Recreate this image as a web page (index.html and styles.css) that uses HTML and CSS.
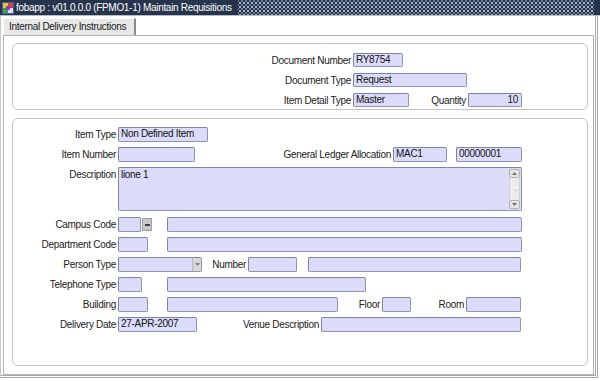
FILE: index.html
```html
<!DOCTYPE html>
<html>
<head>
<meta charset="utf-8">
<link rel="stylesheet" href="styles.css">
</head>
<body>
<div class="app">
  <div class="titlebar">
    <svg class="appicon" width="12" height="12" viewBox="0 0 12 12">
      <rect x="0" y="0" width="12" height="12" fill="#4a5ca8"/>
      <rect x="1" y="1" width="5" height="5" fill="#e8c040"/>
      <rect x="6" y="1" width="5" height="5" fill="#d04040"/>
      <rect x="1" y="6" width="5" height="5" fill="#40a050"/>
      <rect x="6" y="6" width="5" height="5" fill="#e0e0f0"/>
      <circle cx="6" cy="6" r="2.2" fill="#8040b0"/>
    </svg>
    <span class="titletext">fobapp : v01.0.0.0 (FPMO1-1) Maintain Requisitions</span>
    <span class="dots"></span>
  </div>
  <div class="main">
    <div class="tabs">
      <div class="tab">Internal Delivery Instructions</div>
    </div>
    <div class="frame">
      <div class="panel p1">
        <div class="row">
          <span class="lbl l1">Document Number</span>
          <span class="fld w50">RY8754</span>
        </div>
        <div class="row">
          <span class="lbl l1">Document Type</span>
          <span class="fld w114">Request</span>
        </div>
        <div class="row">
          <span class="lbl l1">Item Detail Type</span>
          <span class="fld w56">Master</span>
          <span class="lbl lq">Quantity</span>
          <span class="fld w54 num">10</span>
        </div>
      </div>
      <div class="panel p2">
        <div class="row r2">
          <span class="lbl l2">Item Type</span>
          <span class="fld w90">Non Defined Item</span>
        </div>
        <div class="row r2">
          <span class="lbl l2">Item Number</span>
          <span class="fld w77"></span>
          <span class="lbl lgla">General Ledger Allocation</span>
          <span class="fld w54">MAC1</span>
          <span class="fld w66 ml9">00000001</span>
        </div>
        <div class="row r2 desc">
          <span class="lbl l2">Description</span>
          <div class="fld w404 area">
            <span class="areatext">lione 1</span>
            <div class="vscroll">
              <span class="sbtn">
                <svg width="7" height="5" viewBox="0 0 7 5"><path d="M1 4 L3.5 1 L6 4 Z" fill="#707070"/></svg>
              </span>
              <span class="strack"><span class="sthumb"></span></span>
              <span class="sbtn">
                <svg width="7" height="5" viewBox="0 0 7 5"><path d="M1 1 L3.5 4 L6 1 Z" fill="#707070"/></svg>
              </span>
            </div>
          </div>
        </div>
        <div class="row r2">
          <span class="lbl l2">Campus Code</span>
          <span class="fld w23"></span>
          <span class="lov"><span class="lovdash"></span></span>
          <span class="fld w355 ml15"></span>
        </div>
        <div class="row r2">
          <span class="lbl l2">Department Code</span>
          <span class="fld w30"></span>
          <span class="fld w355 ml19"></span>
        </div>
        <div class="row r2">
          <span class="lbl l2">Person Type</span>
          <span class="fld w84 sel">
            <span class="selbtn">
              <svg width="7" height="5" viewBox="0 0 7 5"><path d="M1 1 L3.5 4 L6 1 Z" fill="#808080"/></svg>
            </span>
          </span>
          <span class="lbl lnum">Number</span>
          <span class="fld w49"></span>
          <span class="fld w213 ml11"></span>
        </div>
        <div class="row r2">
          <span class="lbl l2">Telephone Type</span>
          <span class="fld w24"></span>
          <span class="fld w199 ml25"></span>
        </div>
        <div class="row r2">
          <span class="lbl l2">Building</span>
          <span class="fld w30"></span>
          <span class="fld w171 ml19"></span>
          <span class="lbl lfloor">Floor</span>
          <span class="fld w29"></span>
          <span class="lbl lroom">Room</span>
          <span class="fld w55"></span>
        </div>
        <div class="row r2">
          <span class="lbl l2">Delivery Date</span>
          <span class="fld w79">27-APR-2007</span>
          <span class="lbl lvenue">Venue Description</span>
          <span class="fld w200"></span>
        </div>
      </div>
    </div>
  </div>
</div>
</body>
</html>
```
FILE: styles.css
```css
* { box-sizing: border-box; }
html, body { margin: 0; padding: 0; }
body {
  width: 600px;
  height: 381px;
  overflow: hidden;
  background: #ffffff;
  font-family: "Liberation Sans", Arial, sans-serif;
  font-size: 10px;
  letter-spacing: -0.3px;
  color: #1a1a1a;
}
.app {
  width: 600px;
  height: 381px;
  display: flex;
  flex-direction: column;
}
.titlebar {
  height: 16px;
  flex: none;
  display: flex;
  align-items: center;
  background-color: #26344c;
  border-bottom: 1px solid #b8bcc4;
  color: #ffffff;
}
.appicon { margin: 0 2px 0 2px; flex: none; }
.titletext {
  white-space: nowrap;
  padding-right: 6px;
}
.dots {
  flex: 1;
  height: 100%;
  background-color: #26344c;
  background-image:
    radial-gradient(circle, #a4b0c4 0.8px, transparent 1.1px),
    radial-gradient(circle, #6c7a92 0.8px, transparent 1.1px);
  background-size: 4px 4px, 4px 4px;
  background-position: 0 1px, 2px 3px;
  margin-right: 6px;
}
.main {
  flex: 1;
  display: flex;
  flex-direction: column;
  margin-right: 2px;
  margin-bottom: 3px;
  border-right: 3px double #a8a8a8;
  border-bottom: 3px double #a8a8a8;
  border-left: 1px solid #c8c8c8;
}
.tabs {
  height: 19px;
  flex: none;
  display: flex;
  align-items: flex-end;
  padding-left: 2px;
}
.tab {
  height: 17px;
  width: 133px;
  background: #e8e8e8;
  border-top: 1px solid #ffffff;
  border-left: 1px solid #ffffff;
  border-right: 2px solid #8c8c8c;
  padding: 2px 0 0 5px;
  white-space: nowrap;
  color: #1a1a1a;
}
.frame {
  flex: 1;
  margin-left: 2px;
  margin-right: 1px;
  border: 1px solid #b4b4b4;
  background: #ffffff;
  padding: 7px 4px 0 8px;
  display: flex;
  flex-direction: column;
}
.panel {
  border: 1px solid #c4c4c4;
  border-radius: 6px;
  width: 576px;
}
.p1 {
  height: 67px;
  padding-top: 9px;
  margin-bottom: 8px;
}
.p2 {
  height: 248px;
  padding-top: 8px;
}
.row {
  display: flex;
  align-items: center;
  height: 14px;
  margin-bottom: 6px;
}
.r2 { height: 15px; margin-bottom: 5px; }
.row.desc { height: 44px; margin-bottom: 6px; align-items: flex-start; }
.lbl {
  flex: none;
  text-align: right;
  white-space: nowrap;
  padding-right: 2px;
  color: #222;
}
.desc .lbl { padding-top: 2px; }
.l1 { width: 340px; }
.lq { width: 59px; }
.l2 { width: 105px; }
.lgla { width: 198px; }
.lnum { width: 46px; }
.lfloor { width: 44px; }
.lroom { width: 55px; }
.lvenue { width: 124px; }
.fld {
  flex: none;
  height: 100%;
  background: #dcdcfa;
  border: 1px solid #8e96ae;
  border-top-color: #7c84a0;
  border-left-color: #7c84a0;
  border-radius: 2px;
  padding: 0 2px;
  line-height: 12px;
  white-space: nowrap;
  overflow: hidden;
  color: #111;
  position: relative;
}
.num { text-align: right; padding-right: 3px; }
.w23 { width: 23px; }
.w24 { width: 24px; }
.w29 { width: 29px; }
.w30 { width: 30px; }
.w49 { width: 49px; }
.w50 { width: 50px; }
.w54 { width: 54px; }
.w55 { width: 55px; }
.w56 { width: 56px; }
.w66 { width: 66px; }
.w77 { width: 77px; }
.w79 { width: 79px; }
.w84 { width: 84px; }
.w90 { width: 90px; }
.w114 { width: 114px; }
.w171 { width: 171px; }
.w199 { width: 199px; }
.w200 { width: 200px; }
.w213 { width: 213px; }
.w355 { width: 355px; }
.w404 { width: 404px; }
.ml9 { margin-left: 9px; }
.ml11 { margin-left: 11px; }
.ml15 { margin-left: 15px; }
.ml19 { margin-left: 19px; }
.ml25 { margin-left: 25px; }
.area {
  display: flex;
  padding: 0 1px 0 2px;
}
.areatext { flex: 1; padding-top: 1px; }
.vscroll {
  width: 11px;
  flex: none;
  display: flex;
  flex-direction: column;
  padding: 1px 0;
}
.sbtn {
  height: 9px;
  flex: none;
  background: #e4e4e4;
  border: 1px solid #b0b0b0;
  border-radius: 2px;
  display: flex;
  align-items: center;
  justify-content: center;
}
.strack {
  flex: 1;
  background: #ececec;
  display: flex;
  align-items: center;
  justify-content: center;
  border-left: 1px solid #d0d0d0;
  border-right: 1px solid #d0d0d0;
}
.sthumb {
  width: 4px;
  height: 4px;
  border-top: 1px solid #ffffff;
  border-right: 1px solid #c0c0c0;
  transform: rotate(45deg);
}
.lov {
  flex: none;
  width: 10px;
  height: 13px;
  margin-left: 1px;
  background: #c8c8c8;
  border: 1px solid #a0a0a0;
  display: flex;
  align-items: center;
  justify-content: center;
}
.lovdash {
  width: 5px;
  height: 2px;
  background: #404040;
}
.sel { padding: 0; display: flex; justify-content: flex-end; }
.selbtn {
  width: 9px;
  height: 100%;
  background: #d8d8d8;
  border-left: 1px solid #b8b8b8;
  display: flex;
  align-items: center;
  justify-content: center;
}
```
